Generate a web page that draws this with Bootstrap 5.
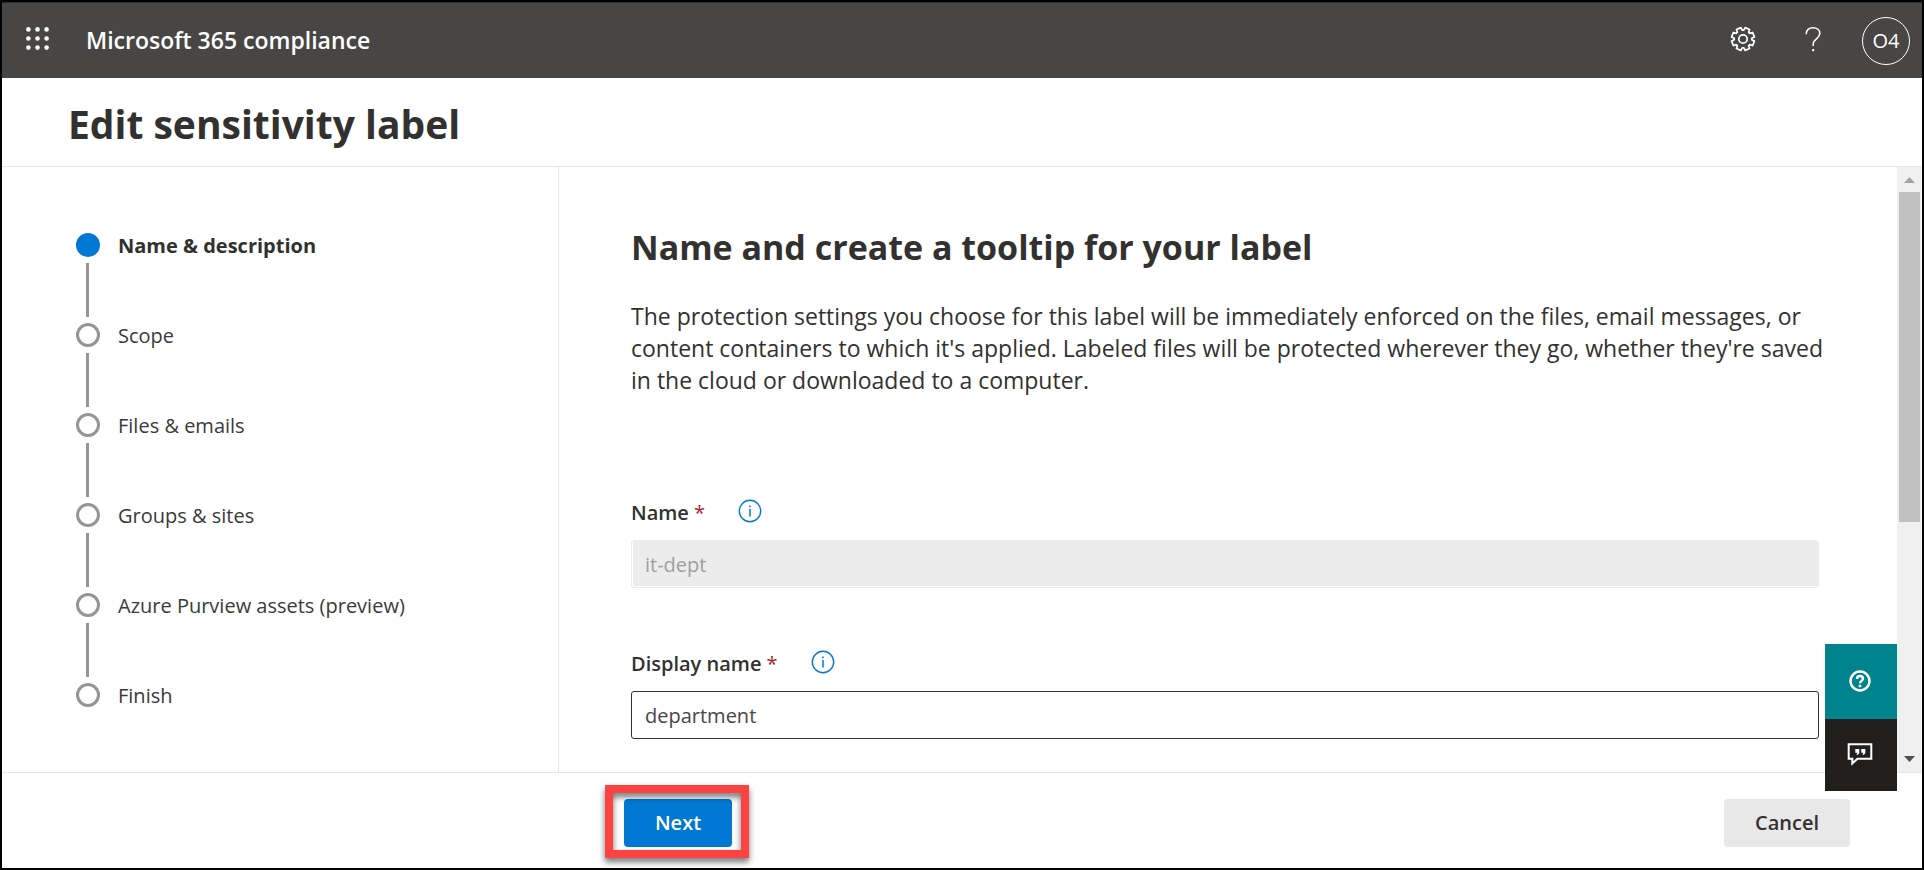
<!DOCTYPE html>
<html lang="en">
<head>
<meta charset="utf-8">
<meta name="viewport" content="width=device-width, initial-scale=1">
<title>Edit sensitivity label</title>
<link href="https://cdn.jsdelivr.net/npm/bootstrap@5.3.0/dist/css/bootstrap.min.css" rel="stylesheet">
<style>
  body { font-family: "Segoe UI", "Open Sans", "Noto Sans", sans-serif; font-size: 20px; color: #323130; background: #fff; }
  .shell { border: 2px solid #000; }
  .topbar { background: #484644; height: 76px; padding: 0 12px 0 24px; color: #fff; border-top: 1px solid #2f2e2d; }
  .topbar button { background: none; border: 0; padding: 0; color: inherit; line-height: 0; }
  .topbar .glyph { padding-bottom: 4px; }
  .brand { font-size: 23px; font-weight: 600; color: #fff; margin-left: 36px; text-decoration: none; }
  .topbar .avatar { width: 48px; height: 48px; border: 1px solid #fff; border-radius: 50%; font-size: 20px; line-height: 46px; }
  .tools { gap: 36px; }
  .title-row { height: 89px; padding: 4px 67px 0 66px; border-bottom: 1px solid #e6e6e6; }
  .title-row h1 { font-size: 39px; font-weight: 700; line-height: 56px; }
  .steps { flex: 0 0 557px; border-right: 1px solid #e6e6e6; padding: 66px 24px 0 74px; }
  .step { height: 90px; gap: 18px; }
  .step:last-child { height: auto; }
  .step a { color: #3b3a39; text-decoration: none; line-height: 26px; }
  .step.current a { font-weight: 700; color: #323130; }
  .rail { width: 24px; gap: 6px; }
  .dot { width: 24px; height: 24px; border: 3px solid #979593; border-radius: 50%; }
  .current .dot { background: #0078d4; border-color: #0078d4; }
  .bar { width: 3px; height: 54px; background: #979593; margin-right: 1px; }
  .pane { padding: 56px 78px 32px 72px; }
  .pane h2 { font-size: 34px; font-weight: 700; line-height: 48px; margin-bottom: 29px; }
  .pane p { font-size: 23px; line-height: 32px; margin: 0 -12px 103px 0; }
  .field { margin-bottom: 62px; }
  .field label { font-size: 20px; font-weight: 600; line-height: 28px; }
  .req { color: #a4262c; font-weight: 400; }
  .info { background: none; border: 0; padding: 0; margin-left: 33px; line-height: 0; }
  .field .form-control { height: 48px; font-size: 20px; border: 1px solid #323130; border-radius: 3px; padding: 0 13px; color: #484644; margin-top: 13px; }
  .field .form-control:disabled { background: #ececec; border-color: #ececec; color: #a19f9d; box-shadow: inset 1px -1px 0 #fff; }
  .scroll { flex: 0 0 25px; background: #f0f0f0; }
  .thumb { width: 21px; height: 330px; background: #c1c1c1; }
  .footer-row { height: 96px; padding: 5px 72px 0 622px; border-top: 1px solid #e6e6e6; }
  .footer-row .btn { height: 48px; border: 0; border-radius: 4px; font-size: 20px; font-weight: 600; padding: 0; }
  .btn-next, .btn-next:hover { width: 108px; background: #0078d4; color: #fff; }
  .btn-cancel { width: 126px; background: #e8e8e8; color: #323130; }
  .marked::after { content: ""; position: absolute; inset: -14px -17px -11px -19px; border: 8px solid #fc4243; pointer-events: none;
    filter: drop-shadow(0 4px 3px rgba(0,0,0,.55)); }
  .dock { position: fixed; right: 27px; bottom: 79px; width: 72px; }
  .dock button { border: 0; padding: 0 2px 2px 0; line-height: 0; width: 72px; height: 75px; background: #00838c; }
  .dock .feedback { height: 72px; background: #201f1e; }
</style>
</head>
<body>
<div class="shell d-flex flex-column min-vh-100">
  <header class="topbar d-flex align-items-center">
    <button type="button" class="glyph" aria-label="App launcher">
      <svg width="24" height="24" viewBox="0 0 24 24" fill="#fff"><circle cx="2.4" cy="2.4" r="2.3"/><circle cx="11.5" cy="2.4" r="2.3"/><circle cx="20.6" cy="2.4" r="2.3"/><circle cx="2.4" cy="11.5" r="2.3"/><circle cx="11.5" cy="11.5" r="2.3"/><circle cx="20.6" cy="11.5" r="2.3"/><circle cx="2.4" cy="20.6" r="2.3"/><circle cx="11.5" cy="20.6" r="2.3"/><circle cx="20.6" cy="20.6" r="2.3"/></svg>
    </button>
    <a class="brand" href="#">Microsoft 365 compliance</a>
    <div class="tools d-flex align-items-center ms-auto">
      <button type="button" class="glyph me-2" aria-label="Settings">
        <svg width="26" height="26" viewBox="0 0 26 26" fill="none" stroke="#fff" stroke-width="1.700" stroke-linejoin="round"><path id="gear" d=""/><circle cx="13" cy="13" r="4.200"/></svg>
      </button>
      <button type="button" class="glyph" aria-label="Help">
        <svg width="26" height="26" viewBox="-4 0 26 26" fill="none" stroke="#fff" stroke-width="1.600"><path d="M2.200 8.200C2.200 4 5 1.800 9 1.800s6.800 2.200 6.800 5.800c0 5-6.600 5.400-6.600 10.200v2.200"/><path d="M9.200 23v2.200" stroke-width="2"/></svg>
      </button>
      <button type="button" class="avatar">O4</button>
    </div>
  </header>
  <div class="title-row d-flex align-items-center"><h1 class="mb-0">Edit sensitivity label</h1></div>
  <main class="d-flex flex-grow-1">
    <nav class="steps" aria-label="Steps">
      <ol class="list-unstyled mb-0">
        <li class="step current d-flex"><span class="rail d-flex flex-column align-items-center"><span class="dot"></span><span class="bar"></span></span><a href="#" aria-current="step">Name &amp; description</a></li>
        <li class="step d-flex"><span class="rail d-flex flex-column align-items-center"><span class="dot"></span><span class="bar"></span></span><a href="#">Scope</a></li>
        <li class="step d-flex"><span class="rail d-flex flex-column align-items-center"><span class="dot"></span><span class="bar"></span></span><a href="#">Files &amp; emails</a></li>
        <li class="step d-flex"><span class="rail d-flex flex-column align-items-center"><span class="dot"></span><span class="bar"></span></span><a href="#">Groups &amp; sites</a></li>
        <li class="step d-flex"><span class="rail d-flex flex-column align-items-center"><span class="dot"></span><span class="bar"></span></span><a href="#">Azure Purview assets (preview)</a></li>
        <li class="step d-flex"><span class="rail d-flex flex-column align-items-center"><span class="dot"></span></span><a href="#">Finish</a></li>
      </ol>
    </nav>
    <section class="pane flex-grow-1">
      <h2>Name and create a tooltip for your label</h2>
      <p>The protection settings you choose for this label will be immediately enforced on the files, email messages, or content containers to which it's applied. Labeled files will be protected wherever they go, whether they're saved in the cloud or downloaded to a computer.</p>
      <div class="field">
        <div class="d-flex align-items-start">
          <label for="name">Name <span class="req">*</span></label>
          <button type="button" class="info" aria-label="About name"><svg width="24" height="24" viewBox="0 0 24 24" fill="none" stroke="#0078d4"><circle cx="12" cy="12" r="10.700" stroke-width="1.400"/><path d="M12 10v7.500M12 6.500v1.700" stroke-width="1.500"/></svg></button>
        </div>
        <input class="form-control" id="name" type="text" value="it-dept" disabled>
      </div>
      <div class="field mb-0">
        <div class="d-flex align-items-start">
          <label for="display">Display name <span class="req">*</span></label>
          <button type="button" class="info" aria-label="About display name"><svg width="24" height="24" viewBox="0 0 24 24" fill="none" stroke="#0078d4"><circle cx="12" cy="12" r="10.700" stroke-width="1.400"/><path d="M12 10v7.500M12 6.500v1.700" stroke-width="1.500"/></svg></button>
        </div>
        <input class="form-control" id="display" type="text" value="department">
      </div>
    </section>
    <div class="scroll d-flex flex-column align-items-center" aria-hidden="true">
      <svg width="25" height="25" viewBox="0 0 25 25"><path d="M7 16L12.500 10 18 16z" fill="#a3a3a3"/></svg>
      <div class="thumb"></div>
      <svg class="mt-auto" width="25" height="25" viewBox="0 0 25 25"><path d="M7 9L12.500 15 18 9z" fill="#505050"/></svg>
    </div>
  </main>
  <footer class="footer-row d-flex align-items-center justify-content-between">
    <div class="marked position-relative"><button type="button" class="btn btn-next">Next</button></div>
    <button type="button" class="btn btn-cancel">Cancel</button>
  </footer>
</div>
<div class="dock d-flex flex-column">
  <button type="button" aria-label="Need help">
    <svg width="22" height="22" viewBox="0 0 22 22" fill="none" stroke="#fff"><circle cx="11" cy="11" r="9.500" stroke-width="2.400"/><path d="M8 9c0-2 1.300-3 3-3s3 1 3 2.700c0 2-3 2.300-3 4.500" stroke-width="2.400"/><path d="M11 14.800v2.400" stroke-width="2.600"/></svg>
  </button>
  <button type="button" class="feedback" aria-label="Feedback">
    <svg width="26" height="24" viewBox="0 0 26 24"><path d="M1.700 2.200h22.600v14.500H10.500L5.300 21.500v-4.800H1.700z" fill="none" stroke="#fff" stroke-width="2"/><path d="M8.300 7h4v4.300l-1.500 1.500H9.500l.8-2H8.300zM14.300 7h4v4.300l-1.500 1.500h-1.300l.8-2h-2z" fill="#fff"/></svg>
  </button>
</div>
<script src="https://cdn.jsdelivr.net/npm/bootstrap@5.3.0/dist/js/bootstrap.bundle.min.js"></script>
<script>
  // Eight-toothed gear outline for the settings button
  const pts = [];
  for (let i = 0; i < 8; i++) {
    [[-17, 8.8], [-12, 11.6], [12, 11.6], [17, 8.8]].forEach(([d, r]) => {
      const a = (i * 45 + 22.5 + d) * Math.PI / 180;
      pts.push((13 + r * Math.cos(a)).toFixed(2) + ' ' + (13 + r * Math.sin(a)).toFixed(2));
    });
  }
  document.getElementById('gear').setAttribute('d', 'M' + pts.join('L') + 'Z');
</script>
</body>
</html>
